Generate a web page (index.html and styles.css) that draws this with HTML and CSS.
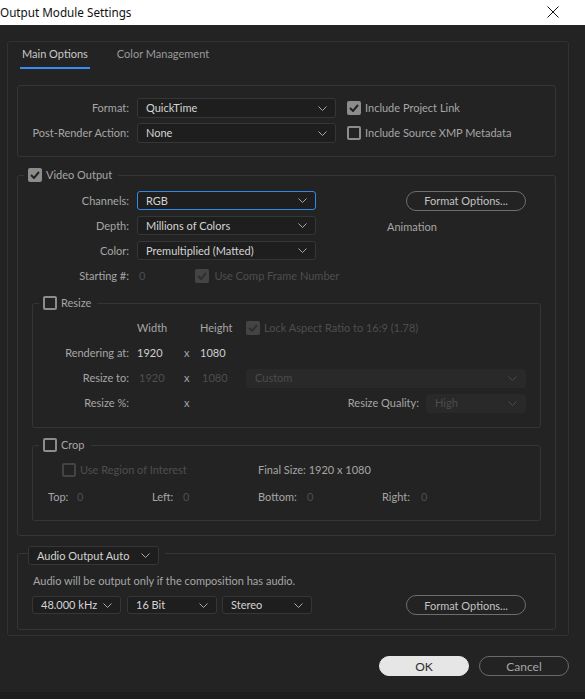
FILE: index.html
```html
<!DOCTYPE html>
<html>
<head>
<meta charset="utf-8">
<link rel="stylesheet" href="styles.css">
</head>
<body>
<div class="titlebar">
  <span class="title">Output Module Settings</span>
  <svg class="close" width="12" height="12" viewBox="0 0 12 12"><path d="M0.5 0.5 L11.5 11.5 M11.5 0.5 L0.5 11.5" stroke="#111" stroke-width="1"/></svg>
</div>
<div class="dialog">
  <div class="panel">
    <div class="tabs">
      <span class="tab active">Main Options</span>
      <span class="tab">Color Management</span>
    </div>

    <div class="box format-box">
      <div class="fgrid">
        <span class="lbl">Format:</span>
        <div class="dd"><span>QuickTime</span><svg class="chev" width="9" height="5" viewBox="0 0 9 5"><polyline points="0.5,0.5 4.5,4.5 8.5,0.5" fill="none" stroke="#a8a8a8"/></svg></div>
        <label class="cb-row"><span class="cb checked"><svg width="10" height="8" viewBox="0 0 10 8"><polyline points="1,4 4,7 9,1" fill="none" stroke="#232323" stroke-width="2"/></svg></span><span class="cb-text">Include Project Link</span></label>
        <span class="lbl">Post-Render Action:</span>
        <div class="dd"><span>None</span><svg class="chev" width="9" height="5" viewBox="0 0 9 5"><polyline points="0.5,0.5 4.5,4.5 8.5,0.5" fill="none" stroke="#a8a8a8"/></svg></div>
        <label class="cb-row"><span class="cb"></span><span class="cb-text">Include Source XMP Metadata</span></label>
      </div>
    </div>

    <div class="group video">
      <div class="legend">
        <span class="cb checked"><svg width="10" height="8" viewBox="0 0 10 8"><polyline points="1,4 4,7 9,1" fill="none" stroke="#232323" stroke-width="2"/></svg></span>
        <span class="legend-text">Video Output</span>
      </div>
      <div class="vgrid">
        <span class="lbl">Channels:</span>
        <div class="dd focus"><span>RGB</span><svg class="chev" width="9" height="5" viewBox="0 0 9 5"><polyline points="0.5,0.5 4.5,4.5 8.5,0.5" fill="none" stroke="#a8a8a8"/></svg></div>
        <div class="vright"><button class="pill">Format Options...</button></div>
        <span class="lbl">Depth:</span>
        <div class="dd"><span>Millions of Colors</span><svg class="chev" width="9" height="5" viewBox="0 0 9 5"><polyline points="0.5,0.5 4.5,4.5 8.5,0.5" fill="none" stroke="#a8a8a8"/></svg></div>
        <div class="vright"><span class="anim">Animation</span></div>
        <span class="lbl">Color:</span>
        <div class="dd"><span>Premultiplied (Matted)</span><svg class="chev" width="9" height="5" viewBox="0 0 9 5"><polyline points="0.5,0.5 4.5,4.5 8.5,0.5" fill="none" stroke="#a8a8a8"/></svg></div>
        <div class="vright"></div>
        <span class="lbl">Starting #:</span>
        <div class="start-row">
          <span class="dimval">0</span>
          <label class="cb-row usecomp"><span class="cb checked disabled"><svg width="10" height="8" viewBox="0 0 10 8"><polyline points="1,4 4,7 9,1" fill="none" stroke="#2e2e2e" stroke-width="2"/></svg></span><span class="cb-text dim">Use Comp Frame Number</span></label>
        </div>
      </div>

      <div class="group sub resize">
        <div class="legend">
          <span class="cb"></span>
          <span class="legend-text">Resize</span>
        </div>
        <div class="rgrid">
          <span></span>
          <span class="hdr">Width</span>
          <span></span>
          <span class="hdr">Height</span>
          <label class="cb-row"><span class="cb checked disabled"><svg width="10" height="8" viewBox="0 0 10 8"><polyline points="1,4 4,7 9,1" fill="none" stroke="#2e2e2e" stroke-width="2"/></svg></span><span class="cb-text dim">Lock Aspect Ratio to 16:9 (1.78)</span></label>

          <span class="lbl">Rendering at:</span>
          <span class="val">1920</span>
          <span class="xs">x</span>
          <span class="val">1080</span>
          <span></span>

          <span class="lbl">Resize to:</span>
          <span class="dimval inp">1920</span>
          <span class="xs">x</span>
          <span class="dimval inp">1080</span>
          <div class="dd disabled"><span>Custom</span><svg class="chev" width="9" height="5" viewBox="0 0 9 5"><polyline points="0.5,0.5 4.5,4.5 8.5,0.5" fill="none" stroke="#4a4a4a"/></svg></div>

          <span class="lbl">Resize %:</span>
          <span></span>
          <span class="xs">x</span>
          <div class="quality">
            <span class="lbl">Resize Quality:</span>
            <div class="dd disabled qdd"><span>High</span><svg class="chev" width="9" height="5" viewBox="0 0 9 5"><polyline points="0.5,0.5 4.5,4.5 8.5,0.5" fill="none" stroke="#4a4a4a"/></svg></div>
          </div>
        </div>
      </div>

      <div class="group sub crop">
        <div class="legend">
          <span class="cb"></span>
          <span class="legend-text">Crop</span>
        </div>
        <div class="crop-row1">
          <label class="cb-row roi"><span class="cb disabled"></span><span class="cb-text dim">Use Region of Interest</span></label>
          <span class="final">Final Size: 1920 x 1080</span>
        </div>
        <div class="cgrid">
          <span class="clbl">Top:</span><span class="dimval">0</span>
          <span class="clbl">Left:</span><span class="dimval">0</span>
          <span class="clbl">Bottom:</span><span class="dimval">0</span>
          <span class="clbl">Right:</span><span class="dimval">0</span>
        </div>
      </div>
    </div>

    <div class="group audio">
      <div class="legend audio-legend">
        <div class="dd audio-dd"><span>Audio Output Auto</span><svg class="chev" width="9" height="5" viewBox="0 0 9 5"><polyline points="0.5,0.5 4.5,4.5 8.5,0.5" fill="none" stroke="#a8a8a8"/></svg></div>
      </div>
      <div class="audio-note">Audio will be output only if the composition has audio.</div>
      <div class="audio-row">
        <div class="dd a1"><span>48.000 kHz</span><svg class="chev" width="9" height="5" viewBox="0 0 9 5"><polyline points="0.5,0.5 4.5,4.5 8.5,0.5" fill="none" stroke="#a8a8a8"/></svg></div>
        <div class="dd a2"><span>16 Bit</span><svg class="chev" width="9" height="5" viewBox="0 0 9 5"><polyline points="0.5,0.5 4.5,4.5 8.5,0.5" fill="none" stroke="#a8a8a8"/></svg></div>
        <div class="dd a3"><span>Stereo</span><svg class="chev" width="9" height="5" viewBox="0 0 9 5"><polyline points="0.5,0.5 4.5,4.5 8.5,0.5" fill="none" stroke="#a8a8a8"/></svg></div>
        <button class="pill audio-pill">Format Options...</button>
      </div>
    </div>
  </div>

  <div class="buttons">
    <button class="btn ok">OK</button>
    <button class="btn cancel">Cancel</button>
  </div>
</div>
<div class="strip"></div>
</body>
</html>
```
FILE: styles.css
```css
* { box-sizing: border-box; }
html, body { margin: 0; padding: 0; }
body {
  width: 585px;
  height: 699px;
  background: #1d1d1d;
  font-family: "Lato", "Open Sans", sans-serif;
  font-size: 11px;
  line-height: 14px;
  color: #a6a6a6;
  overflow: hidden;
}
.titlebar {
  height: 25px;
  background: #ffffff;
  display: flex;
  align-items: center;
  justify-content: space-between;
  padding: 0 26px 2px 0;
}
.title {
  font-family: "Noto Sans", sans-serif;
  font-size: 11.7px;
  color: #111;
}
.dialog {
  background: #232323;
  height: 667px;
  padding: 16px 16px 0 7px;
}
.panel {
  border: 1px solid #323232;
  border-radius: 3px;
  height: 595px;
  padding: 0 12px 0 9px;
}
.tabs {
  display: flex;
  gap: 25px;
  padding: 5px 0 0 3px;
  height: 24px;
}
.tab {
  padding: 0 2px 2px;
  height: 22px;
  color: #9a9a9a;
}
.tab.active {
  color: #c9c9c9;
  border-bottom: 2px solid #378ef0;
}
.box {
  margin-top: 19px;
  border: 1px solid #353535;
  border-radius: 3px;
}
.format-box {
  padding: 12px 0 13px;
}
.fgrid {
  display: grid;
  grid-template-columns: 119px 199px 1fr;
  row-gap: 5px;
  align-items: center;
}
.lbl {
  text-align: right;
  padding-right: 8px;
  color: #a6a6a6;
  white-space: nowrap;
}
.fgrid .dd { width: 199px; }
.fgrid .cb-row { margin-left: 11px; }
.dd {
  height: 20px;
  background: #1e1e1e;
  border: 1px solid #363636;
  border-radius: 3px;
  display: flex;
  align-items: center;
  justify-content: space-between;
  padding: 0 8px 0 8px;
  color: #d4d4d4;
}
.dd.focus { border-color: #3289e8; }
.dd.disabled {
  background: #292929;
  border-color: #292929;
  color: #4c4c4c;
}
.chev { flex: none; }
.cb-row {
  display: flex;
  align-items: center;
  gap: 4px;
}
.cb {
  width: 14px;
  height: 14px;
  border: 2px solid #8c8c8c;
  border-radius: 2px;
  display: inline-flex;
  align-items: center;
  justify-content: center;
  flex: none;
}
.cb.checked {
  background: #8c8c8c;
}
.cb.disabled { border-color: #444; }
.cb.checked.disabled { background: #444; }
.cb-text { color: #a6a6a6; white-space: nowrap; }
.dim { color: #4e4e4e; }
.dimval { color: #4e4e4e; }

.group {
  border: 1px solid #353535;
  border-radius: 3px;
}
.video {
  margin-top: 18px;
  padding: 0 0 14px;
}
.legend {
  display: flex;
  align-items: center;
  gap: 4px;
  width: fit-content;
  height: 16px;
  margin: -9px 0 0 6px;
  padding: 0 6px 0 4px;
  background: #232323;
}
.legend-text { color: #a6a6a6; }
.vgrid {
  display: grid;
  grid-template-columns: 119px 179px 1fr;
  grid-auto-rows: 19px;
  row-gap: 6px;
  align-items: center;
  margin-top: 8px;
}
.vgrid .dd { height: 19px; width: 179px; }
.vright {
  display: flex;
  align-items: center;
  padding-left: 71px;
}
.pill {
  font-family: inherit;
  font-size: 11px;
  height: 20px;
  width: 120px;
  background: transparent;
  border: 1px solid #6e6e6e;
  border-radius: 10px;
  color: #c2c2c2;
  padding: 0;
  margin-left: 19px;
}
.anim { color: #a6a6a6; padding-top: 3px; }
.start-row {
  grid-column: 2 / 4;
  display: flex;
  align-items: center;
  padding-left: 2px;
}
.usecomp { margin-left: 50px; }
.usecomp .cb-text { margin-left: 1px; }

.sub {
  margin: 18px 14px 0;
  padding-bottom: 14px;
}
.sub.crop { margin-top: 17px; }
.rgrid {
  display: grid;
  grid-template-columns: 104px 47px 16px 46px 280px;
  grid-auto-rows: 20px;
  row-gap: 5px;
  align-items: center;
  margin-top: 7px;
}
.hdr { color: #a6a6a6; }
.val { color: #d0d0d0; }
.inp { padding-left: 2px; }
.xs { color: #a6a6a6; padding-left: 0px; }
.rgrid .dd { height: 19px; }
.quality {
  grid-column: 4 / 6;
  display: flex;
  align-items: center;
  justify-content: flex-end;
}
.quality .lbl { padding-right: 7px; }
.qdd { width: 100px; height: 20px; }

.crop-row1 {
  display: flex;
  align-items: center;
  height: 19px;
  margin-top: 7px;
  padding-left: 29px;
}
.roi { width: 196px; }
.final { color: #a6a6a6; }
.cgrid {
  display: grid;
  grid-template-columns: 29px 75px 31px 75px 49px 75px 39px 1fr;
  height: 19px;
  align-items: center;
  margin-top: 8px;
  padding-left: 15px;
}
.clbl { color: #a6a6a6; }

.audio {
  margin-top: 17px;
  padding-bottom: 14px;
}
.audio-legend {
  height: 19px;
  margin: -8px 0 0 10px;
  padding: 0 6px 0 0;
}
.audio-dd { width: 131px; height: 19px; }
.audio-note {
  margin-top: 8px;
  padding-left: 15px;
  height: 16px;
  line-height: 16px;
}
.audio-row {
  display: flex;
  align-items: center;
  margin-top: 6px;
  padding-left: 14px;
  height: 20px;
}
.audio-row .dd { height: 18px; }
.a1 { width: 89px; }
.a2 { width: 90px; margin-left: 6px; }
.a3 { width: 90px; margin-left: 5px; }
.audio-pill { margin-left: 94px; }

.buttons {
  display: flex;
  justify-content: flex-end;
  gap: 10px;
  margin-top: 20px;
}
.btn {
  font-family: inherit;
  font-size: 12px;
  width: 90px;
  height: 20px;
  border-radius: 10px;
  padding: 0;
}
.ok {
  background: #e6e6e6;
  border: 1px solid #e6e6e6;
  color: #2b2b2b;
}
.cancel {
  background: transparent;
  border: 1px solid #6a6a6a;
  color: #a6a6a6;
}
.strip {
  height: 7px;
  background: #1d1d1d;
}
```
